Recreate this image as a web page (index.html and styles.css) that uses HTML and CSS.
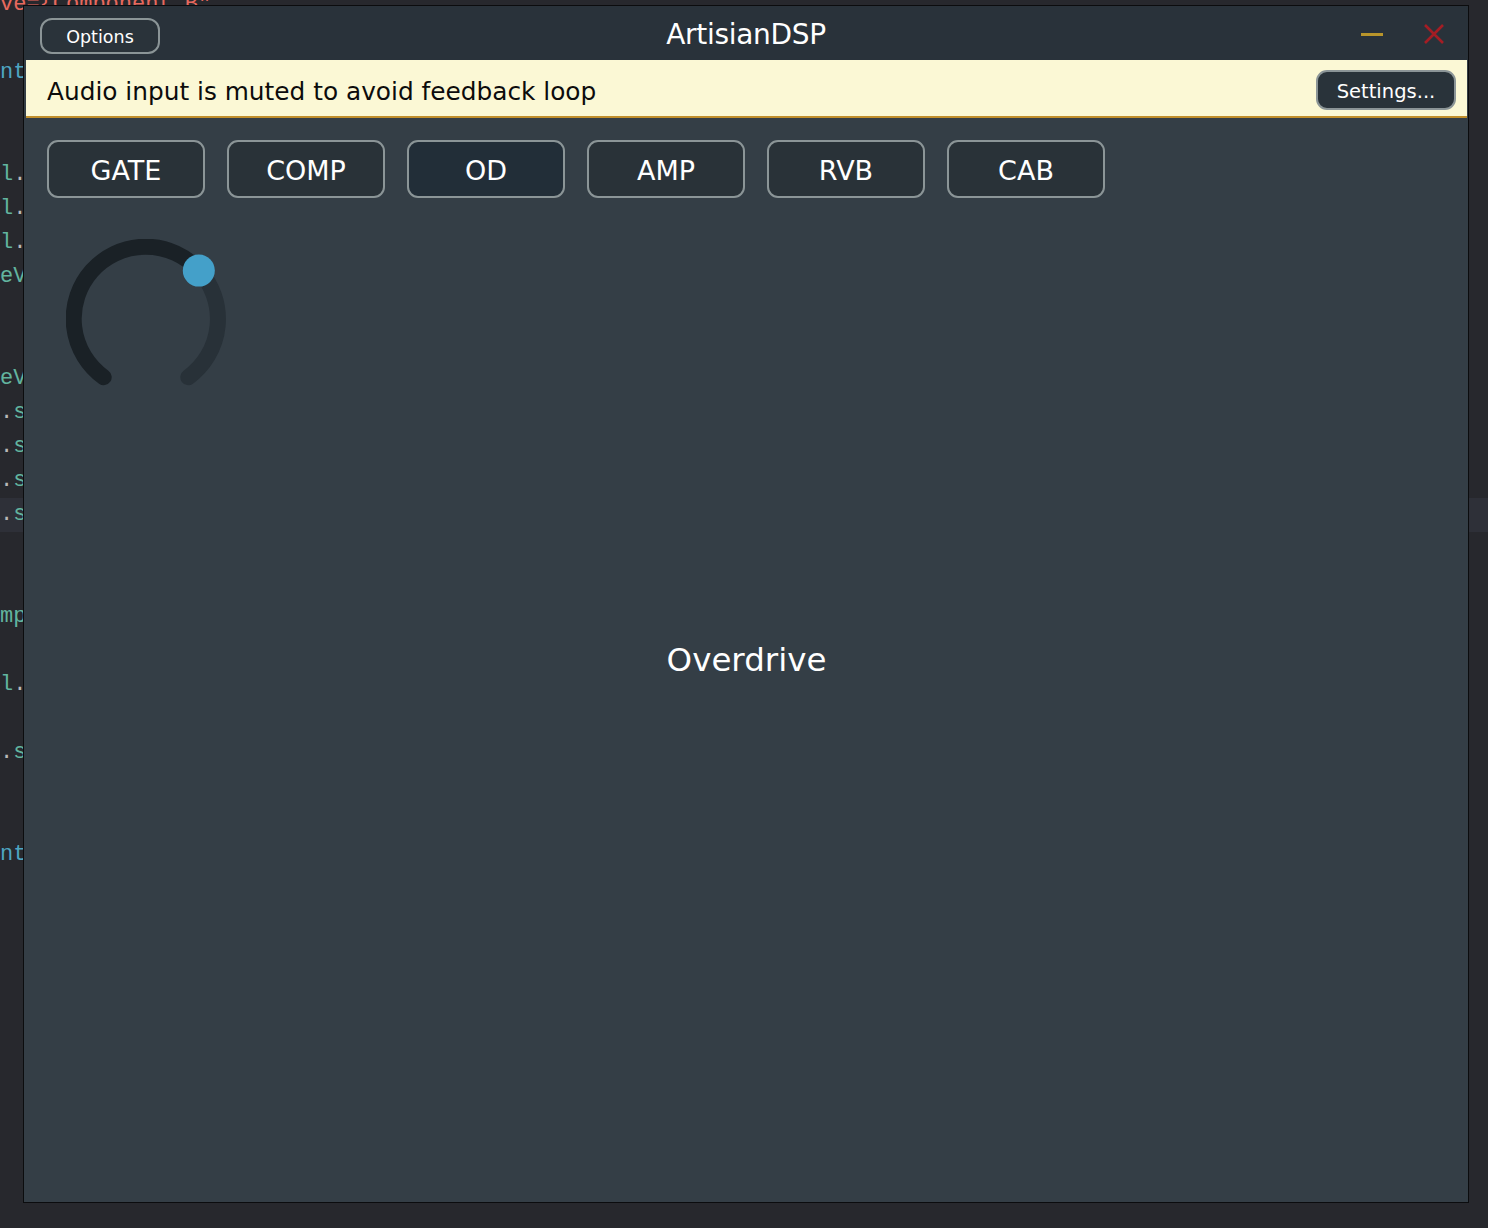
FILE: index.html
```html
<!DOCTYPE html>
<html>
<head>
<meta charset="utf-8">
<link rel="stylesheet" href="styles.css">
<title>ArtisianDSP</title>
</head>
<body>
<div class="editor">
  <div class="line"><span class="red">ve={Component B"</span></div>
  <div class="line"></div>
  <div class="line"><span class="blue">nt</span></div>
  <div class="line"></div>
  <div class="line"></div>
  <div class="line"><span class="teal">l</span><span class="dot">.</span></div>
  <div class="line"><span class="teal">l</span><span class="dot">.</span></div>
  <div class="line"><span class="teal">l</span><span class="dot">.</span></div>
  <div class="line"><span class="teal">eV</span></div>
  <div class="line"></div>
  <div class="line"></div>
  <div class="line"><span class="teal">eV</span></div>
  <div class="line"><span class="dot">.</span><span class="teal">s</span></div>
  <div class="line"><span class="dot">.</span><span class="teal">s</span></div>
  <div class="line"><span class="dot">.</span><span class="teal">s</span></div>
  <div class="line current"><span class="dot">.</span><span class="teal">s</span></div>
  <div class="line"></div>
  <div class="line"></div>
  <div class="line"><span class="teal">mp</span></div>
  <div class="line"></div>
  <div class="line"><span class="teal">l</span><span class="dot">.</span></div>
  <div class="line"></div>
  <div class="line"><span class="dot">.</span><span class="teal">s</span></div>
  <div class="line"></div>
  <div class="line"></div>
  <div class="line"><span class="blue">nt</span></div>
</div>

<div class="window">
  <div class="titlebar">
    <button class="options">Options</button>
    <div class="title">ArtisianDSP</div>
    <div class="controls">
      <span class="minimize"></span>
      <svg class="close" width="22" height="22" viewBox="0 0 22 22"><path d="M2 2 L20 20 M20 2 L2 20" stroke="#a41d24" stroke-width="2.6" fill="none"/></svg>
    </div>
  </div>
  <div class="banner">
    <span class="banner-text">Audio input is muted to avoid feedback loop</span>
    <button class="settings">Settings...</button>
  </div>
  <div class="content">
    <div class="panel">
      <div class="tabs">
        <button class="tab">GATE</button>
        <button class="tab">COMP</button>
        <button class="tab active">OD</button>
        <button class="tab">AMP</button>
        <button class="tab">RVB</button>
        <button class="tab">CAB</button>
      </div>
      <svg class="knob" width="160" height="160" viewBox="0 0 160 160">
        <path d="M37.7 138.2 A72 72 0 1 1 132.8 31.1" stroke="#1a2126" stroke-width="16" fill="none" stroke-linecap="round"/>
        <path d="M132.8 31.1 A72 72 0 0 1 122.3 138.2" stroke="#283138" stroke-width="16" fill="none" stroke-linecap="round"/>
        <circle cx="132.8" cy="31.6" r="16" fill="#44a0c9"/>
      </svg>
    </div>
    <div class="label">Overdrive</div>
  </div>
</div>
</body>
</html>
```
FILE: styles.css
```css
html, body {
  margin: 0;
  padding: 0;
}
body {
  background: #27282d;
  width: 1488px;
  height: 1228px;
  overflow: hidden;
  position: relative;
  font-family: "DejaVu Sans", "Noto Sans", sans-serif;
}
.editor {
  margin-top: -12px;
  font-family: "Liberation Mono", "DejaVu Sans Mono", monospace;
  font-size: 22px;
  line-height: 34px;
}
.line {
  height: 34px;
  white-space: pre;
}
.line.current {
  background: #2e3038;
}
.red { color: #e8695e; }
.blue { color: #4ea5c2; }
.teal { color: #62b49f; }
.dot { color: #b9b9b9; }

.window {
  position: absolute;
  left: 23px;
  top: 5px;
  width: 1444px;
  height: 1196px;
  border: 1px solid #0b0c0e;
  background: #343e46;
  display: flex;
  flex-direction: column;
}
.titlebar {
  height: 54px;
  background: #29323a;
  display: grid;
  grid-template-columns: 1fr auto 1fr;
  align-items: center;
  padding: 0 0 0 16px;
}
.options {
  justify-self: start;
  width: 120px;
  height: 36px;
  margin-top: 5px;
  border: 2px solid #8b9597;
  border-radius: 12px;
  background: #2a333a;
  color: #ffffff;
  font-family: "DejaVu Sans", sans-serif;
  font-size: 17.5px;
  padding: 2px 0 0 0;
}
.title {
  color: #ffffff;
  font-size: 28px;
  letter-spacing: -0.3px;
  margin-left: -16px;
  padding-top: 2px;
}
.controls {
  justify-self: end;
  display: flex;
  align-items: center;
  gap: 40px;
  padding-right: 23px;
  padding-top: 2px;
}
.minimize {
  display: block;
  width: 22px;
  height: 3px;
  background: #b8952b;
}
.close {
  display: block;
}
.banner {
  height: 56px;
  margin: 0 1px 0 2px;
  background: #fbf8d5;
  border-bottom: 2px solid #c18f2b;
  display: flex;
  align-items: center;
  justify-content: space-between;
  padding: 0 11px 0 21px;
}
.banner-text {
  color: #0c0c0c;
  font-size: 24.8px;
  padding-top: 6px;
}
.settings {
  width: 140px;
  height: 40px;
  margin-top: 4px;
  border: 2px solid #8b9597;
  border-radius: 11px;
  background: #29333a;
  color: #ffffff;
  font-family: "DejaVu Sans", sans-serif;
  font-size: 19.5px;
  padding: 3px 0 0 0;
}
.content {
  flex: 1;
  display: grid;
}
.panel, .label {
  grid-area: 1 / 1;
}
.panel {
  padding: 22px 23px;
  display: flex;
  flex-direction: column;
  align-items: flex-start;
}
.tabs {
  display: flex;
  gap: 22px;
}
.tab {
  width: 158px;
  height: 58px;
  border: 2px solid #8b9597;
  border-radius: 11px;
  background: #293238;
  color: #ffffff;
  font-family: "DejaVu Sans", sans-serif;
  font-size: 27px;
  padding: 3px 0 0 0;
}
.tab.active {
  background: #222e38;
}
.knob {
  display: block;
  margin-top: 41px;
  margin-left: 19px;
}
.label {
  align-self: center;
  justify-self: center;
  color: #ffffff;
  font-size: 32.5px;
  margin-left: 1px;
}
```
